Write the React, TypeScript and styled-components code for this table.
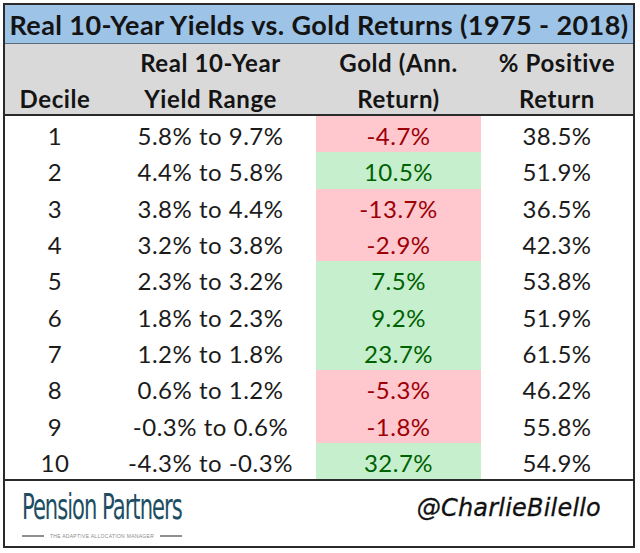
import { ReactElement } from 'react'
import styled, { createGlobalStyle } from 'styled-components'

const GlobalStyle = createGlobalStyle`
  html, body {
    margin: 0;
    padding: 0;
    background: #ffffff;
  }
  body {
    font-family: Lato, 'Open Sans', sans-serif;
    color: #1b1b1b;
  }
`

type Tone = 'neg' | 'pos'

interface Row {
  decile: number
  range: string
  gold: string
  tone: Tone
  positive: string
}

const rows: Row[] = [
  { decile: 1, range: '5.8% to 9.7%', gold: '-4.7%', tone: 'neg', positive: '38.5%' },
  { decile: 2, range: '4.4% to 5.8%', gold: '10.5%', tone: 'pos', positive: '51.9%' },
  { decile: 3, range: '3.8% to 4.4%', gold: '-13.7%', tone: 'neg', positive: '36.5%' },
  { decile: 4, range: '3.2% to 3.8%', gold: '-2.9%', tone: 'neg', positive: '42.3%' },
  { decile: 5, range: '2.3% to 3.2%', gold: '7.5%', tone: 'pos', positive: '53.8%' },
  { decile: 6, range: '1.8% to 2.3%', gold: '9.2%', tone: 'pos', positive: '51.9%' },
  { decile: 7, range: '1.2% to 1.8%', gold: '23.7%', tone: 'pos', positive: '61.5%' },
  { decile: 8, range: '0.6% to 1.2%', gold: '-5.3%', tone: 'neg', positive: '46.2%' },
  { decile: 9, range: '-0.3% to 0.6%', gold: '-1.8%', tone: 'neg', positive: '55.8%' },
  { decile: 10, range: '-4.3% to -0.3%', gold: '32.7%', tone: 'pos', positive: '54.9%' },
]

const Page = styled.div`
  padding: 3px 0 0 3px;
`

const Frame = styled.div`
  width: 628px;
  border: 2px solid #2a2a2a;
  background: #ffffff;
`

const Title = styled.div`
  height: 38px;
  background: #9dc3e6;
  border-bottom: 1px solid #5a6b7c;
  display: flex;
  align-items: center;
  justify-content: center;
  font-size: 27px;
  font-weight: 700;
  letter-spacing: 0.4px;
  color: #141414;
  white-space: nowrap;
`

const Grid = styled.div`
  display: grid;
  grid-template-columns: 100px 211px 165px 1fr;
`

const HeadCell = styled.div`
  height: 70px;
  background: #d9d9d9;
  border-bottom: 2px solid #2a2a2a;
  display: flex;
  flex-direction: column;
  justify-content: flex-end;
  align-items: center;
  gap: 6px;
  font-size: 24px;
  font-weight: 700;
  letter-spacing: 0.6px;
  line-height: 30px;
  color: #141414;
  white-space: nowrap;
`

const Cell = styled.div<{ $tone?: Tone }>`
  box-sizing: border-box;
  height: 36.3px;
  padding-top: 3px;
  display: flex;
  align-items: center;
  justify-content: center;
  font-size: 24px;
  letter-spacing: 0.5px;
  white-space: nowrap;
  background: ${({ $tone }) =>
    $tone === 'neg' ? '#ffc7ce' : $tone === 'pos' ? '#c6efce' : 'transparent'};
  color: ${({ $tone }) =>
    $tone === 'neg' ? '#9c0006' : $tone === 'pos' ? '#006100' : '#1b1b1b'};
`

const Footer = styled.div`
  height: 65px;
  border-top: 2px solid #2a2a2a;
  display: flex;
  align-items: flex-start;
  justify-content: space-between;
  padding: 0 32px 0 17px;
`

const Logo = styled.div`
  width: 160px;
  display: flex;
  flex-direction: column;
  align-items: flex-start;
  padding-top: 6px;
`

const LogoName = styled.div`
  font-family: 'DejaVu Sans Condensed', 'DejaVu Sans', sans-serif;
  font-stretch: condensed;
  font-size: 36px;
  line-height: 40px;
  letter-spacing: -1.5px;
  color: #1d4e63;
  transform: scaleX(0.65);
  transform-origin: left center;
  white-space: nowrap;
`

const Tagline = styled.div`
  width: 160px;
  display: flex;
  align-items: center;
  justify-content: center;
  gap: 6px;
  margin-top: 6px;
  font-family: 'Liberation Sans', sans-serif;
  font-size: 5px;
  letter-spacing: 0.3px;
  color: #8a8a8a;
  white-space: nowrap;

  &::before,
  &::after {
    content: '';
    width: 34px;
    height: 2px;
    background: #8f8f8f;
  }
`

const Handle = styled.div`
  padding-top: 13px;
  font-family: 'DejaVu Sans', sans-serif;
  font-style: italic;
  font-size: 24px;
  letter-spacing: 0.2px;
  color: #111111;
  -webkit-text-stroke: 0.3px #111111;
`

export default function App(): ReactElement {
  return (
    <Page>
      <GlobalStyle />
      <Frame>
        <Title>Real 10-Year Yields vs. Gold Returns (1975 - 2018)</Title>
        <Grid>
          <HeadCell>Decile</HeadCell>
          <HeadCell>
            <span>Real 10-Year</span>
            <span>Yield Range</span>
          </HeadCell>
          <HeadCell>
            <span>Gold (Ann.</span>
            <span>Return)</span>
          </HeadCell>
          <HeadCell>
            <span>% Positive</span>
            <span>Return</span>
          </HeadCell>
          {rows.map((row) => (
            <>
              <Cell key={`d${row.decile}`}>{row.decile}</Cell>
              <Cell key={`r${row.decile}`}>{row.range}</Cell>
              <Cell key={`g${row.decile}`} $tone={row.tone}>
                {row.gold}
              </Cell>
              <Cell key={`p${row.decile}`}>{row.positive}</Cell>
            </>
          ))}
        </Grid>
        <Footer>
          <Logo>
            <LogoName>Pension Partners</LogoName>
            <Tagline>THE ADAPTIVE ALLOCATION MANAGER</Tagline>
          </Logo>
          <Handle>@CharlieBilello</Handle>
        </Footer>
      </Frame>
    </Page>
  )
}
